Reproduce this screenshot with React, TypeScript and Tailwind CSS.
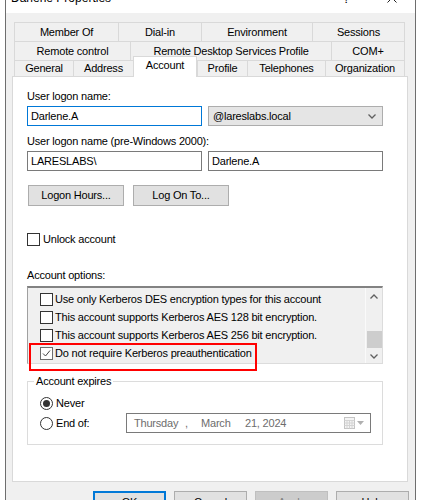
import React from 'react'

type Tab = { label: string; cls: string; last?: boolean }

const row1: Tab[] = [
  { label: 'Member Of', cls: 'w-[104px]' },
  { label: 'Dial-in', cls: 'w-[83px]' },
  { label: 'Environment', cls: 'w-[111px]' },
  { label: 'Sessions', cls: 'w-[93px]', last: true },
]

const row2: Tab[] = [
  { label: 'Remote control', cls: 'w-[116px]' },
  { label: 'Remote Desktop Services Profile', cls: 'w-[201px]' },
  { label: 'COM+', cls: 'w-[74px]', last: true },
]

const row3Left: Tab[] = [
  { label: 'General', cls: 'w-[59px]' },
  { label: 'Address', cls: 'w-[60px]' },
]

const row3Right: Tab[] = [
  { label: 'Profile', cls: 'w-[50px]' },
  { label: 'Telephones', cls: 'w-[78px]' },
  { label: 'Organization', cls: 'w-[80px]', last: true },
]

const TabCell = ({ tab, h }: { tab: Tab; h: string }) => (
  <div
    className={`${tab.cls} ${h} flex items-center justify-center border-t border-l border-[#d9d9d9] bg-[#f0f0f0] ${
      tab.last ? 'border-r' : ''
    }`}
  >
    {tab.label}
  </div>
)

const CheckBox = ({ checked = false }: { checked?: boolean }) => (
  <span
    className={`w-[13px] h-[13px] shrink-0 border bg-white flex items-center justify-center ${
      checked ? 'border-[#6d6d6d]' : 'border-[#333333]'
    }`}
  >
    {checked ? (
      <svg width="11" height="11" viewBox="0 0 11 11">
        <polyline points="2,5.5 4.5,8 9,2.5" fill="none" stroke="#444" strokeWidth="1" />
      </svg>
    ) : null}
  </span>
)

const Radio = ({ checked = false }: { checked?: boolean }) => (
  <span className="w-[13px] h-[13px] shrink-0 rounded-full border border-[#333333] bg-white flex items-center justify-center">
    {checked ? <span className="w-[7px] h-[7px] rounded-full bg-[#333333]" /> : null}
  </span>
)

const Chevron = ({ up = false }: { up?: boolean }) => (
  <svg width="8" height="5" viewBox="0 0 8 5">
    <polyline
      points={up ? '0.5,4.5 4,1 7.5,4.5' : '0.5,0.5 4,4 7.5,0.5'}
      fill="none"
      stroke="#606060"
      strokeWidth="1.3"
    />
  </svg>
)

const options = [
  { label: 'Use only Kerberos DES encryption types for this account', checked: false },
  { label: 'This account supports Kerberos AES 128 bit encryption.', checked: false },
  { label: 'This account supports Kerberos AES 256 bit encryption.', checked: false },
  { label: 'Do not require Kerberos preauthentication', checked: true },
]

export default function App() {
  return (
    <div className="relative w-[421px] h-[500px] overflow-hidden bg-white text-[11px] leading-[15px] tracking-[-0.2px] text-black font-['Liberation_Sans',Arial,sans-serif]">
      <div className="-mt-[17px] ml-[5px] w-[411px] border-x border-[#6e6e6e]">
        {/* title bar */}
        <div className="h-[30px] bg-white flex items-center text-[12px] tracking-normal">
          <span className="ml-[5px]">Darlene Properties</span>
          <span className="ml-auto mr-[19px] text-[13px]">?</span>
          <div className="w-[46px] h-[30px] flex items-center justify-center">
            <svg width="10" height="10" viewBox="0 0 10 10">
              <path d="M0.5 0.5 L9.5 9.5 M9.5 0.5 L0.5 9.5" stroke="#222" strokeWidth="1" />
            </svg>
          </div>
        </div>

        {/* dialog body */}
        <div className="bg-[#f0f0f0] pt-[9px] pl-[6px] pb-[20px]">
          <div className="ml-[2px] flex">
            {row1.map((t) => (
              <TabCell key={t.label} tab={t} h="h-[19px]" />
            ))}
          </div>
          <div className="ml-[2px] flex">
            {row2.map((t) => (
              <TabCell key={t.label} tab={t} h="h-[19px]" />
            ))}
          </div>
          <div className="ml-[2px] flex items-start h-[16px]">
            {row3Left.map((t) => (
              <TabCell key={t.label} tab={t} h="h-[16px]" />
            ))}
            <div className="relative z-10 -mt-[4px] w-[64px] h-[21px] pb-[3px] flex items-center justify-center border-t border-x border-[#d9d9d9] bg-white">
              Account
            </div>
            {row3Right.map((t) => (
              <TabCell key={t.label} tab={t} h="h-[16px]" />
            ))}
          </div>

          {/* Account page */}
          <div className="w-[396px] h-[406px] border border-[#d9d9d9] bg-white pl-[14px] pt-[12px]">
            <div>User logon name:</div>
            <div className="mt-[2px] flex gap-[6px]">
              <div className="w-[175px] h-[20px] border border-[#0078d7] pl-[3px] flex items-center">Darlene.A</div>
              <div className="w-[175px] h-[20px] border border-[#adadad] bg-[#e5e5e5] pl-[4px] pr-[6px] flex items-center">
                <span>@lareslabs.local</span>
                <span className="ml-auto">
                  <Chevron />
                </span>
              </div>
            </div>

            <div className="mt-[8px]">User logon name (pre-Windows 2000):</div>
            <div className="mt-[2px] flex gap-[6px]">
              <div className="w-[175px] h-[20px] border border-[#7a7a7a] pl-[3px] flex items-center">LARESLABS\</div>
              <div className="w-[175px] h-[20px] border border-[#7a7a7a] pl-[3px] flex items-center">Darlene.A</div>
            </div>

            <div className="mt-[14px] ml-[1px] flex gap-[9px]">
              <div className="w-[96px] h-[21px] border border-[#adadad] bg-[#e1e1e1] flex items-center justify-center">
                Logon Hours...
              </div>
              <div className="w-[96px] h-[21px] border border-[#adadad] bg-[#e1e1e1] flex items-center justify-center">
                Log On To...
              </div>
            </div>

            <div className="mt-[27px] h-[13px] flex items-center gap-[3px]">
              <CheckBox />
              <span>Unlock account</span>
            </div>

            <div className="mt-[22px]">Account options:</div>
            <div className="mt-[3px] w-[356px] h-[78px] flex border-t-2 border-l border-r border-b border-t-[#828282] border-l-[#a0a0a0] border-r-[#dcdcdc] border-b-[#dcdcdc] bg-[#f0f0f0]">
              <div className="flex-1 pt-[2px] pl-[12px]">
                {options.map((o) => (
                  <div key={o.label} className="h-[18px] flex items-center gap-[2px]">
                    <CheckBox checked={o.checked} />
                    <span>{o.label}</span>
                  </div>
                ))}
              </div>
              <div className="w-[17px] border-l border-[#fafafa] flex flex-col items-center">
                <div className="h-[17px] flex items-center justify-center">
                  <Chevron up />
                </div>
                <div className="mt-[27px] w-[15px] h-[17px] bg-[#cdcdcd]" />
                <div className="mt-[2px] h-[14px] flex items-center justify-center">
                  <Chevron />
                </div>
              </div>
            </div>

            <fieldset className="mt-[10px] w-[356px] border border-[#dcdcdc] pb-[11px]">
              <legend className="ml-[6px] px-[2px]">Account expires</legend>
              <div className="mt-[6px] pl-[12px] h-[16px] flex items-center gap-[3px]">
                <Radio checked />
                <span>Never</span>
              </div>
              <div className="mt-[2px] pl-[12px] h-[20px] flex items-center">
                <div className="w-[86px] flex items-center gap-[3px]">
                  <Radio />
                  <span>End of:</span>
                </div>
                <div className="w-[245px] h-[20px] border border-[#7a7a7a] flex items-center pl-[7px] pr-[6px] text-[#6d6d6d]">
                  <span className="w-[51px]">Thursday</span>
                  <span className="w-[16px]">,</span>
                  <span className="w-[44px]">March</span>
                  <span>21, 2024</span>
                  <span className="ml-auto flex items-center gap-[2px]">
                    <svg width="11" height="12" viewBox="0 0 11 12">
                      <rect x="0.5" y="0.5" width="10" height="11" fill="#f4f4f4" stroke="#c4c4c4" />
                      <path d="M0.5 3.5 H10.5 M0.5 6 H10.5 M0.5 8.5 H10.5 M3 3.5 V11.5 M5.5 3.5 V11.5 M8 3.5 V11.5" stroke="#d4d4d4" strokeWidth="1" />
                    </svg>
                    <svg width="7" height="4" viewBox="0 0 7 4">
                      <polygon points="0,0 7,0 3.5,4" fill="#b0b0b0" />
                    </svg>
                  </span>
                </div>
              </div>
            </fieldset>
          </div>

          {/* dialog buttons */}
          <div className="mt-[9px] pr-[6px] flex justify-end gap-[8px]">
            <div className="w-[73px] h-[23px] border-2 border-[#0078d7] bg-[#e1e1e1] flex items-center justify-center">OK</div>
            <div className="w-[73px] h-[23px] border border-[#adadad] bg-[#e1e1e1] flex items-center justify-center">Cancel</div>
            <div className="w-[73px] h-[23px] border border-[#bfbfbf] bg-[#cccccc] text-[#838383] flex items-center justify-center">Apply</div>
            <div className="w-[73px] h-[23px] border border-[#adadad] bg-[#e1e1e1] flex items-center justify-center">Help</div>
          </div>
        </div>
      </div>

      {/* highlight around the preauthentication option */}
      <div className="absolute left-[29px] top-[343px] w-[228px] h-[28px] border-2 border-[#ff0000]" />
    </div>
  )
}
